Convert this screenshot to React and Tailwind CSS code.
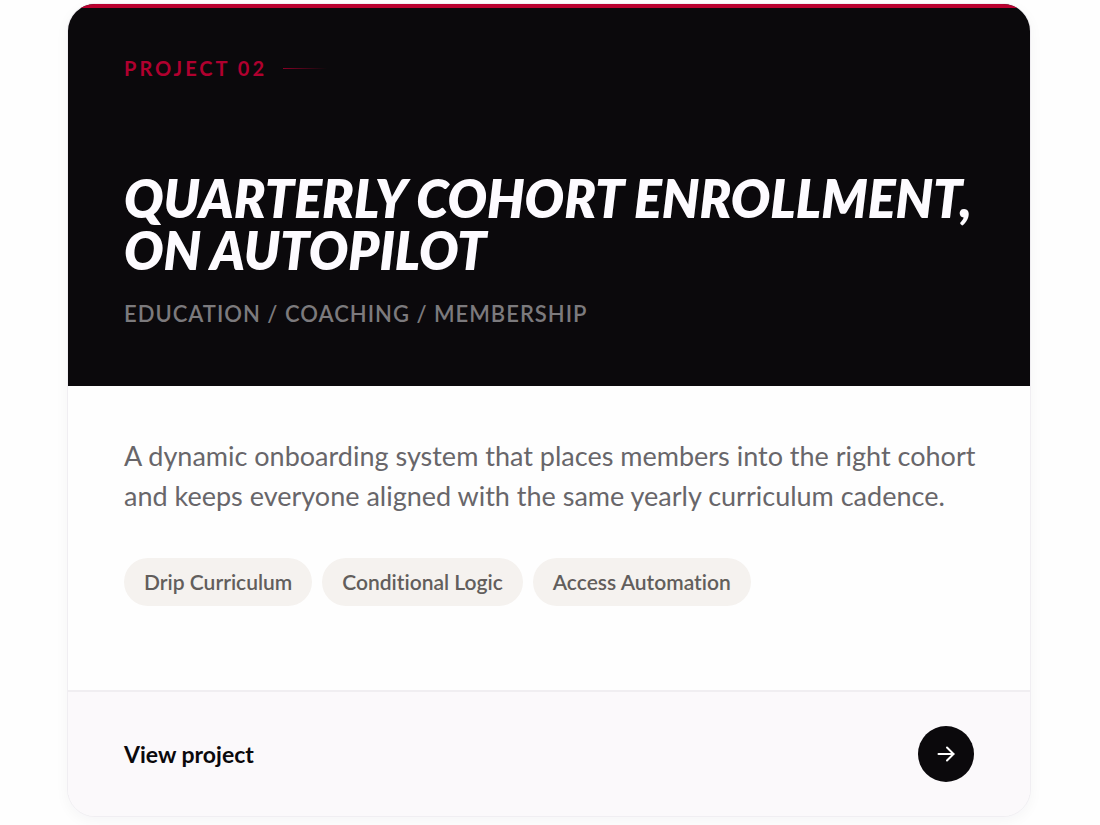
import React from 'react';

const project = {
    label: 'Project 02',
    title: 'Quarterly Cohort Enrollment, on Autopilot',
    category: 'Education / Coaching / Membership',
    description: 'A dynamic onboarding system that places members into the right cohort and keeps everyone aligned with the same yearly curriculum cadence.',
    tags: ['Drip Curriculum', 'Conditional Logic', 'Access Automation']
};

const ArrowIcon = () => (
    <svg
        className="w-6 h-6"
        viewBox="0 0 24 24"
        fill="none"
        stroke="currentColor"
        strokeWidth="2"
        strokeLinecap="round"
        strokeLinejoin="round"
        aria-hidden="true"
    >
        <path d="M4.5 12h15" />
        <path d="M13 5.5l6.5 6.5-6.5 6.5" />
    </svg>
);

const ProjectCard = ({ label, title, category, description, tags }) => {
    return (
        <article className="overflow-hidden rounded-[28px] border border-[#f0eef2] bg-[#fefefe] shadow-[0_4px_14px_rgba(30,10,40,0.04)]">
            <header className="border-t-4 border-[#b9002f] bg-[#0b090c] px-14 pt-12 pb-14">
                <div className="flex items-center gap-4">
                    <p className="text-[20px] leading-6 font-bold uppercase tracking-[3px] text-[#b0002f]">{label}</p>
                    <span className="h-px w-11 bg-linear-to-r from-[#8a0026] to-transparent"></span>
                </div>
                <h2 className="mt-[92px] text-[52px] leading-[52px] font-extrabold italic uppercase text-[#fdfbff]">
                    {title}
                </h2>
                <p className="mt-[22px] text-[22px] leading-8 font-semibold uppercase tracking-[1px] text-[#7c7a7d]">{category}</p>
            </header>

            <div className="pt-[50px] pr-12 pb-[84px] pl-14">
                <p className="text-[27px] leading-10 text-[#68666a]">{description}</p>
                <ul className="mt-[42px] flex flex-wrap gap-[10px]">
                    {tags.map(tag => (
                        <li key={tag} className="rounded-full bg-[#f5f2ef] px-5 py-3 text-[21px] leading-6 font-semibold text-[#625e5c] [font-variant-ligatures:none]">
                            {tag}
                        </li>
                    ))}
                </ul>
            </div>

            <a href="#project-02" className="flex items-center justify-between border-t-2 border-[#f0eef1] bg-[#fbf9fb] px-14 py-[34px]">
                <span className="text-[23px] leading-8 font-bold text-[#0b090c]">View project</span>
                <span className="flex h-14 w-14 items-center justify-center rounded-full bg-[#0b090c] text-white">
                    <ArrowIcon />
                </span>
            </a>
        </article>
    );
};

const App = () => {
    return (
        <main className="min-h-screen bg-[#fefefe] pt-[3px] pr-[69px] pl-[67px] font-['Lato','Open_Sans',sans-serif]">
            <ProjectCard {...project} />
        </main>
    );
};

export default App;
